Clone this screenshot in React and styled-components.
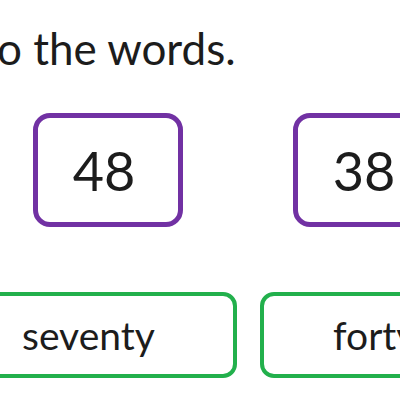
import React from 'react';
import styled, { createGlobalStyle } from 'styled-components';

const GlobalStyle = createGlobalStyle`
  html, body {
    margin: 0;
    padding: 0;
    background: #ffffff;
  }
  body {
    font-family: Lato, "Open Sans", sans-serif;
    color: #1c1c1c;
  }
`;

const Sheet = styled.div`
  display: flex;
  flex-direction: column;
  width: 400px;
  height: 400px;
  overflow: hidden;
`;

const Instruction = styled.p`
  margin: 0 0 0 -3px;
  padding-top: 20px;
  font-size: 44px;
  line-height: 56px;
  white-space: nowrap;
`;

const Row = styled.div`
  display: flex;
  flex-shrink: 0;
  gap: ${(p) => p.gap}px;
  margin-top: ${(p) => p.top}px;
  margin-left: ${(p) => p.left}px;
`;

const NumberBox = styled.div`
  flex-shrink: 0;
  box-sizing: border-box;
  width: 150px;
  height: 114px;
  border: 5px solid #7131a3;
  border-radius: 17px;
  display: flex;
  align-items: center;
  justify-content: center;
  padding-right: 8px;
  font-size: 54px;
`;

const WordBox = styled.div`
  flex-shrink: 0;
  box-sizing: border-box;
  width: 288px;
  height: 86px;
  border: 4px solid #22b04c;
  border-radius: 14px;
  display: flex;
  align-items: center;
  padding-left: 69px;
  font-size: 39px;
`;

const numbers = ['48', '38', '70'];
const words = ['seventy', 'forty-eight', 'thirty-eight'];

export default function App() {
  return (
    <Sheet>
      <GlobalStyle />
      <Instruction>o the words.</Instruction>
      <Row gap={110} top={37} left={33}>
        {numbers.map((n) => (
          <NumberBox key={n}>{n}</NumberBox>
        ))}
      </Row>
      <Row gap={23} top={65} left={-51}>
        {words.map((w) => (
          <WordBox key={w}>{w}</WordBox>
        ))}
      </Row>
    </Sheet>
  );
}
